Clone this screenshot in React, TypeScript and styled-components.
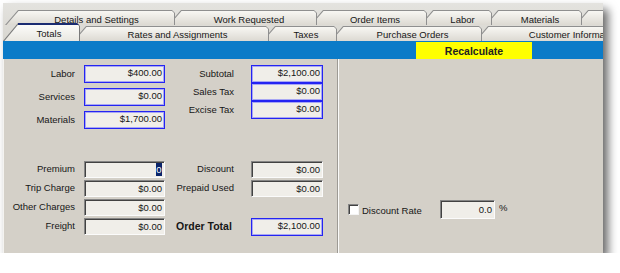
import React from "react";
import styled, { createGlobalStyle } from "styled-components";

const GlobalStyle = createGlobalStyle`
  html, body {
    margin: 0;
    padding: 0;
    background: #fff;
  }
  body {
    font-family: "Liberation Sans", Arial, sans-serif;
    font-size: 9.5px;
    color: #161616;
  }
`;

const Page = styled.div`
  padding: 3px 0 0 3px;
`;

const Window = styled.div`
  width: 600px;
  height: 250px;
  overflow: hidden;
  background: #d4d0c8;
  box-shadow: 5px 6px 9px rgba(0, 0, 0, 0.6);
  display: flex;
  flex-direction: column;
`;

const TabStrip = styled.div`
  height: 38px;
  box-sizing: border-box;
  padding-top: 7px;
  background: linear-gradient(#e4e3df, #d8d6d0);
  display: flex;
  flex-direction: column;
`;

const TabRow = styled.div<{ $h: number; $pad: number; $z: number; $pull?: number }>`
  position: relative;
  z-index: ${p => p.$z};
  display: flex;
  align-items: flex-end;
  height: ${p => p.$h}px;
  margin-top: ${p => -(p.$pull || 0)}px;
  padding-left: ${p => p.$pad}px;
`;

const SLOPE = 13;

const TabShape = styled.div<{ $w: number; $z: number; $h: number; $slope: number; $selected?: boolean }>`
  position: relative;
  flex: none;
  box-sizing: border-box;
  width: ${p => p.$w}px;
  height: ${p => p.$h}px;
  margin-left: -7px;
  padding-left: ${p => p.$slope}px;
  z-index: ${p => p.$z};
  background: ${p => (p.$selected ? "#7a7a7a" : "#8f8f8f")};
  clip-path: polygon(0 100%, ${p => p.$slope}px 0, calc(100% - 3px) 0, 100% 3px, 100% 100%);
  display: flex;
  align-items: center;
  justify-content: center;
  white-space: nowrap;
  line-height: 1;

  &::before {
    content: "";
    position: absolute;
    left: 1px;
    top: 1px;
    right: 1px;
    bottom: 0;
    background: ${p =>
      p.$selected
        ? "linear-gradient(#fdfdfb, #e9e7e1)"
        : "linear-gradient(#f8f7f3, #dcd9d2)"};
    clip-path: polygon(
      0.4px 100%,
      ${p => (p.$slope - p.$slope / p.$h + 0.4).toFixed(2)}px 0,
      calc(100% - 2px) 0,
      100% 2px,
      100% 100%
    );
  }

  &::after {
    content: "";
    display: ${p => (p.$selected ? "block" : "none")};
    position: absolute;
    top: 0;
    left: ${p => p.$slope}px;
    right: 0;
    height: 2px;
    background: #1b2c72;
  }
`;

const TabText = styled.span<{ $drop: number }>`
  position: relative;
  padding-top: ${p => p.$drop}px;
`;

type TabDef = { label: string; w: number; selected?: boolean };

const topTabs: TabDef[] = [
  { label: "Details and Settings", w: 170 },
  { label: "Work Requested", w: 149 },
  { label: "Order Items", w: 117 },
  { label: "Labor", w: 72 },
  { label: "Materials", w: 97 },
  { label: "", w: 120 },
];

const bottomTabs: TabDef[] = [
  { label: "Totals", w: 77, selected: true },
  { label: "Rates and Assignments", w: 196 },
  { label: "Taxes", w: 75 },
  { label: "Purchase Orders", w: 152 },
  { label: "Customer Information", w: 186 },
];

function Tabs({ tabs, h, drop }: { tabs: TabDef[]; h: number; drop: number }) {
  return (
    <>
      {tabs.map((t, i) => {
        const th = t.selected ? h + 3 : h;
        const slope = t.selected ? 15 : SLOPE;
        return (
          <TabShape
            key={i}
            $w={t.w}
            $h={th}
            $slope={slope}
            $z={t.selected ? 40 : 20 - i}
            $selected={t.selected}
          >
            <TabText $drop={t.selected ? drop + 2 : drop}>{t.label}</TabText>
          </TabShape>
        );
      })}
    </>
  );
}

const ActionBar = styled.div`
  height: 18px;
  background: #0b7bc8;
  padding-left: 413px;
  display: flex;
  align-items: flex-end;
`;

const Recalculate = styled.div`
  width: 116px;
  height: 17px;
  background: #ffff00;
  display: flex;
  align-items: center;
  justify-content: center;
  font-weight: bold;
  font-size: 10.5px;
  color: #222;
`;

const Content = styled.div`
  flex: 1;
  display: flex;
`;

const LeftPanel = styled.div`
  width: 335px;
  box-sizing: border-box;
  border-left: 1px solid #f4f3f0;
  border-right: 1px solid #9d9a94;
  padding-top: 6px;
`;

const RightPanel = styled.div`
  flex: 1;
  border-left: 1px solid #fbfbfa;
  padding: 141px 0 0 9px;
`;

const Section = styled.div<{ $top?: number }>`
  display: flex;
  align-items: flex-start;
  margin-top: ${p => p.$top || 0}px;
`;

const Column = styled.div<{ $gap: number }>`
  display: flex;
  flex-direction: column;
  gap: ${p => p.$gap}px;
`;

const Row = styled.div<{ $h: number }>`
  display: flex;
  align-items: center;
  height: ${p => p.$h}px;
`;

const Label = styled.div<{ $w: number; $gap: number; $left?: boolean; $bold?: boolean }>`
  width: ${p => p.$w}px;
  margin-right: ${p => p.$gap}px;
  box-sizing: border-box;
  padding-left: ${p => (p.$left ? 11 : 0)}px;
  padding-bottom: 2px;
  text-align: ${p => (p.$left ? "left" : "right")};
  font-weight: ${p => (p.$bold ? "bold" : "normal")};
  font-size: ${p => (p.$bold ? "10.5px" : "9.5px")};
  white-space: nowrap;
`;

const Box = styled.div<{ $w: number; $kind: "blue" | "sunken" }>`
  width: ${p => p.$w}px;
  height: 100%;
  box-sizing: border-box;
  background: #f0eee9;
  display: flex;
  align-items: center;
  justify-content: flex-end;
  padding-right: 2px;
  white-space: nowrap;
  ${p =>
    p.$kind === "blue"
      ? `
    border: 1px solid #2424f2;
    box-shadow: inset 0 0 0 1px rgba(80, 80, 255, 0.45);
    padding-bottom: 3px;
  `
      : `
    border-top: 1px solid #858585;
    border-left: 1px solid #858585;
    border-right: 1px solid #fbfbfb;
    border-bottom: 1px solid #fbfbfb;
    box-shadow: inset 1px 1px 0 #424242;
  `}
`;

const Selection = styled.span`
  background: #0a246a;
  color: #fff;
  line-height: 13px;
  padding: 0 0.5px;
`;

const Spacer = styled.div<{ $h: number }>`
  height: ${p => p.$h}px;
`;

const CheckRow = styled.div`
  display: flex;
  align-items: center;
  height: 19px;
`;

const CheckBox = styled.span`
  width: 11px;
  height: 11px;
  box-sizing: border-box;
  background: #fff;
  border-top: 1px solid #858585;
  border-left: 1px solid #858585;
  border-right: 1px solid #f4f4f4;
  border-bottom: 1px solid #f4f4f4;
  box-shadow: inset 1px 1px 0 #424242;
`;

const CheckLabel = styled.span`
  width: 78px;
  margin-left: 3px;
  padding-top: 1px;
`;

const Percent = styled.span`
  margin-left: 4px;
  margin-bottom: 5px;
`;

const A = { label: 71, gap: 9, box: 81 };
const B = { label: 69, gap: 17, box: 72 };

type FieldProps = {
  label: string;
  value: React.ReactNode;
  h: number;
  kind: "blue" | "sunken";
  col: typeof A;
  bold?: boolean;
};

function Field({ label, value, h, kind, col, bold }: FieldProps) {
  return (
    <Row $h={h}>
      <Label $w={col.label} $gap={col.gap} $left={bold} $bold={bold}>
        {label}
      </Label>
      <Box $w={col.box} $kind={kind}>
        {value}
      </Box>
    </Row>
  );
}

export default function App() {
  return (
    <Page>
      <GlobalStyle />
      <Window>
        <TabStrip>
          <TabRow $h={15} $pad={9} $z={1}>
            <Tabs tabs={topTabs} h={15} drop={4} />
          </TabRow>
          <TabRow $h={18} $pad={7} $z={2} $pull={2}>
            <Tabs tabs={bottomTabs} h={15} drop={2} />
          </TabRow>
        </TabStrip>
        <ActionBar>
          <Recalculate>Recalculate</Recalculate>
        </ActionBar>
        <Content>
          <LeftPanel>
            <Section>
              <Column $gap={5}>
                <Field label="Labor" value="$400.00" h={18} kind="blue" col={A} />
                <Field label="Services" value="$0.00" h={18} kind="blue" col={A} />
                <Field label="Materials" value="$1,700.00" h={18} kind="blue" col={A} />
              </Column>
              <Column $gap={0}>
                <Field label="Subtotal" value="$2,100.00" h={18} kind="blue" col={B} />
                <Field label="Sales Tax" value="$0.00" h={18} kind="blue" col={B} />
                <Field label="Excise Tax" value="$0.00" h={18} kind="blue" col={B} />
              </Column>
            </Section>
            <Section $top={32}>
              <Column $gap={2}>
                <Field label="Premium" value={<Selection>0</Selection>} h={17} kind="sunken" col={A} />
                <Field label="Trip Charge" value="$0.00" h={17} kind="sunken" col={A} />
                <Field label="Other Charges" value="$0.00" h={17} kind="sunken" col={A} />
                <Field label="Freight" value="$0.00" h={17} kind="sunken" col={A} />
              </Column>
              <Column $gap={2}>
                <Field label="Discount" value="$0.00" h={17} kind="sunken" col={B} />
                <Field label="Prepaid Used" value="$0.00" h={17} kind="sunken" col={B} />
                <Spacer $h={17} />
                <Field label="Order Total" value="$2,100.00" h={18} kind="blue" col={B} bold />
              </Column>
            </Section>
          </LeftPanel>
          <RightPanel>
            <CheckRow>
              <CheckBox />
              <CheckLabel>Discount Rate</CheckLabel>
              <Box $w={55} $kind="sunken">0.0</Box>
              <Percent>%</Percent>
            </CheckRow>
          </RightPanel>
        </Content>
      </Window>
    </Page>
  );
}
